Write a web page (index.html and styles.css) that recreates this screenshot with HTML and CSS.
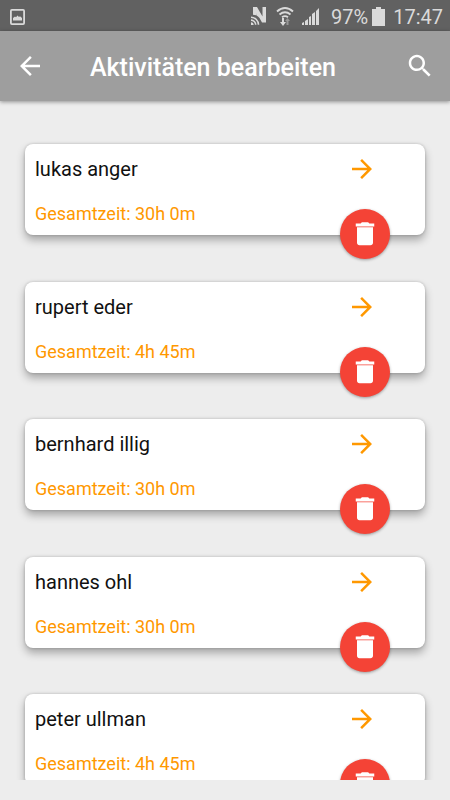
FILE: index.html
```html
<!DOCTYPE html>
<html lang="de">
<head>
<meta charset="utf-8">
<meta name="viewport" content="width=device-width, initial-scale=1">
<title>Aktivitäten bearbeiten</title>
<link rel="stylesheet" href="styles.css">
</head>
<body>
<svg class="symbols" aria-hidden="true">
  <symbol id="arrow" viewBox="0 0 24 24"><path d="M12 4l-1.41 1.41L16.17 11H4v2h12.17l-5.58 5.59L12 20l8-8z"/></symbol>
  <symbol id="trash" viewBox="0 0 24 24"><path d="M5.6 19c0 1.1.9 2 2 2h8.8c1.1 0 2-.9 2-2V6.6H5.6V19zM19.4 3.6h-3.9l-1-1h-5l-1 1H4.6v2.3h14.8V3.6z"/></symbol>
</svg>
<div class="status">
  <svg class="status-photo" viewBox="0 0 15 16" aria-hidden="true"><rect x="0.9" y="0.9" width="13.2" height="14.2" rx="1" fill="none" stroke="currentColor" stroke-width="1.8"/><path d="M3 11.5V9l2-1.5 1 .7L7.5 6.5 9 8l1-.7L12 9v2.500z"/></svg>
  <div class="status-right">
    <svg class="nfc" viewBox="0 0 17 19" aria-hidden="true"><path d="M3 0h4l5.500 9.500V0H16v15.500h-4L9.500 11Q8 9 6.500 8.500V6L6.300 8.300 3 7.800z"/><path d="M1 10.300a7.500 7.500 0 0 1 7.500 7.500M1 13.100a4.700 4.700 0 0 1 4.700 4.700" fill="none" stroke="currentColor" stroke-width="1.6"/><path d="M1 15.200A2.800 2.800 0 0 1 3.600 18H1z"/></svg>
    <svg class="wifi" viewBox="0 0 18 19" aria-hidden="true"><path d="M1 4.500Q9-2.500 17 4.500M3.500 7.500q5.500-4.500 11 0M6 10.200q3-2.200 6 0" fill="none" stroke="currentColor" stroke-width="1.9"/><path d="M6 11h2v4h2l-3 4-3-4h2z"/><path class="dim" d="M10.500 18v-4H9l2.500-3 2.500 3h-1.500v4z"/></svg>
    <svg class="signal" viewBox="0 0 17 17" aria-hidden="true"><path d="M0 17v-2l2-1v3zM3 17v-4l3-2v6zM7 17V9l2-1v9zM10 17V6l3-2v13zM14 17V3l3-3v17z"/></svg>
    <span class="percent">97%</span>
    <svg class="battery" viewBox="0 0 13 19" aria-hidden="true"><path d="M4 0h5v2h4v17H0V2h4z"/></svg>
    <time>17:47</time>
  </div>
</div>
<header class="appbar">
  <button class="icon-button" type="button" aria-label="Zurück"><svg viewBox="0 0 24 24"><path d="M20 11H7.83l5.59-5.59L12 4l-8 8 8 8 1.41-1.41L7.83 13H20v-2z"/></svg></button>
  <h1>Aktivitäten bearbeiten</h1>
  <button class="icon-button" type="button" aria-label="Suchen"><svg viewBox="0 0 24 24"><path d="M15.5 14h-.79l-.28-.27C15.41 12.59 16 11.11 16 9.5 16 5.91 13.09 3 9.5 3S3 5.91 3 9.5 5.91 16 9.5 16c1.61 0 3.09-.59 4.23-1.57l.27.28v.79l5 4.99L20.49 19l-4.99-5zm-6 0C7.01 14 5 11.99 5 9.5S7.01 5 9.5 5 14 7.01 14 9.5 11.99 14 9.5 14z"/></svg></button>
</header>
<main>
  <ul class="list">
    <li class="card"><h2>lukas anger</h2><p>Gesamtzeit: 30h 0m</p><button class="open" type="button" aria-label="Öffnen"><svg><use href="#arrow"/></svg></button><button class="delete" type="button" aria-label="Löschen"><svg><use href="#trash"/></svg></button></li>
    <li class="card"><h2>rupert eder</h2><p>Gesamtzeit: 4h 45m</p><button class="open" type="button" aria-label="Öffnen"><svg><use href="#arrow"/></svg></button><button class="delete" type="button" aria-label="Löschen"><svg><use href="#trash"/></svg></button></li>
    <li class="card"><h2>bernhard illig</h2><p>Gesamtzeit: 30h 0m</p><button class="open" type="button" aria-label="Öffnen"><svg><use href="#arrow"/></svg></button><button class="delete" type="button" aria-label="Löschen"><svg><use href="#trash"/></svg></button></li>
    <li class="card"><h2>hannes ohl</h2><p>Gesamtzeit: 30h 0m</p><button class="open" type="button" aria-label="Öffnen"><svg><use href="#arrow"/></svg></button><button class="delete" type="button" aria-label="Löschen"><svg><use href="#trash"/></svg></button></li>
    <li class="card"><h2>peter ullman</h2><p>Gesamtzeit: 4h 45m</p><button class="open" type="button" aria-label="Öffnen"><svg><use href="#arrow"/></svg></button><button class="delete" type="button" aria-label="Löschen"><svg><use href="#trash"/></svg></button></li>
  </ul>
</main>
</body>
</html>
```
FILE: styles.css
```css
* { box-sizing: border-box; margin: 0; padding: 0; }
body {
  display: flex;
  flex-direction: column;
  height: 100vh;
  padding-bottom: 20px;
  overflow: hidden;
  background: #ededed;
  color: #111;
  font-family: Roboto, "Liberation Sans", sans-serif;
}
.symbols { position: absolute; width: 0; height: 0; }
svg { display: block; fill: currentColor; }
button { border: 0; background: none; color: inherit; font: inherit; }
.status {
  display: flex;
  flex: none;
  align-items: center;
  justify-content: space-between;
  height: 31px;
  padding: 2px 7px 0 10px;
  background: #616161;
  color: #dadada;
  font-size: 20px;
  line-height: 28px;
}
.status-photo { width: 15px; height: 16px; }
.status-right { display: flex; align-items: center; }
.nfc { width: 17px; height: 19px; margin-right: 9px; }
.wifi { width: 18px; height: 19px; margin-right: 8px; }
.dim { opacity: 0.45; }
.signal { width: 17px; height: 17px; margin-right: 12px; }
.percent { margin-right: 4px; }
.battery { width: 13px; height: 19px; margin-right: 8px; }
.appbar {
  position: relative;
  display: flex;
  flex: none;
  align-items: center;
  height: 70px;
  padding: 0 15px;
  background: #9e9e9e;
  color: #fff;
  box-shadow: 0 1px 4px rgba(0, 0, 0, 0.4);
  z-index: 1;
}
.appbar h1 {
  flex: 1;
  padding: 3px 0 0 45px;
  font-size: 25px;
  line-height: 32px;
  font-weight: 500;
}
.icon-button, .icon-button svg, .open, .open svg { width: 30px; height: 30px; }
main { flex: 1; min-height: 0; overflow: hidden; }
.list { padding: 43px 25px; list-style: none; }
.card {
  position: relative;
  margin-bottom: 47px;
  padding: 10px;
  border-radius: 8px;
  background: #fff;
  box-shadow: 0 5px 8px rgba(0, 0, 0, 0.3), 0 0 3px rgba(0, 0, 0, 0.2);
}
.card:nth-child(even) { margin-bottom: 46px; }
.card h2 {
  margin-bottom: 18px;
  font-size: 20px;
  line-height: 30px;
  font-weight: 400;
}
.card p {
  color: #ff9800;
  font-size: 18px;
  line-height: 23px;
}
.open {
  position: absolute;
  top: 10px;
  right: 48px;
  color: #ff9800;
}
.delete {
  position: absolute;
  right: 35px;
  bottom: -24px;
  display: grid;
  place-items: center;
  width: 50px;
  height: 50px;
  border-radius: 50%;
  background: #f44336;
  color: #fff;
  box-shadow: 0 1px 3px rgba(0, 0, 0, 0.35);
}
.delete svg { width: 30px; height: 30px; }
```
